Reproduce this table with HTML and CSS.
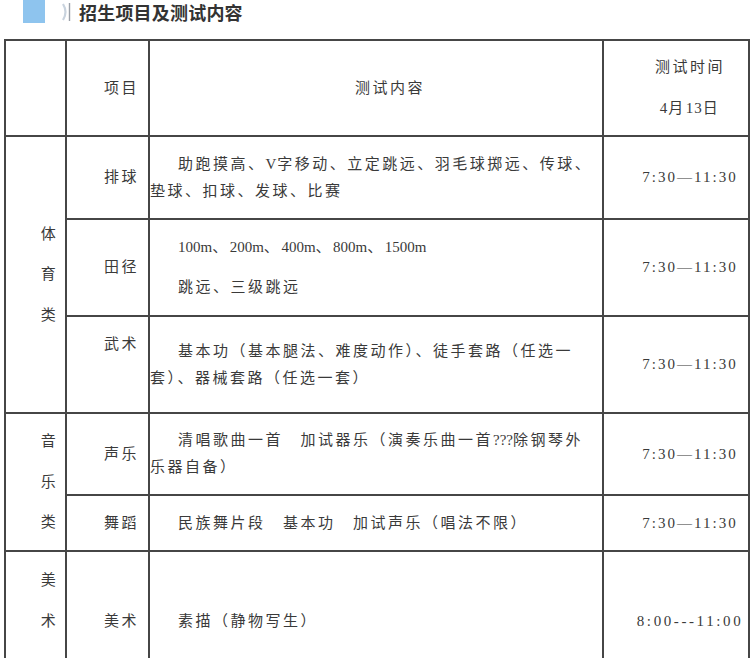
FILE: index.html
```html
<!DOCTYPE html>
<html lang="zh-CN">
<head>
<meta charset="utf-8">
<title>招生项目及测试内容</title>
<link rel="stylesheet" href="styles.css">
</head>
<body>
<div class="head">
  <div class="blue"></div>
  <svg class="deco" width="10" height="20" viewBox="0 0 10 20">
    <path d="M1 2 Q6 10 1 18" fill="none" stroke="#c9d3de" stroke-width="2.2"/>
    <path d="M7.5 1 V19" stroke="#9aa0a8" stroke-width="1.4"/>
  </svg>
  <h1 class="title">招生项目及测试内容</h1>
</div>
<table class="grid">
  <colgroup>
    <col class="c1"><col class="c2"><col class="c3"><col class="c4">
  </colgroup>
  <tr class="r-head">
    <td class="ctr"></td>
    <td class="ctr"><p>项目</p></td>
    <td class="ctr"><p>测试内容</p></td>
    <td class="ctr"><p>测试时间</p><p><span class="n">4</span>月<span class="n">13</span>日</p></td>
  </tr>
  <tr class="r1">
    <td class="ctr" rowspan="3"><p>体</p><p>育</p><p>类</p></td>
    <td class="ctr"><p>排球</p></td>
    <td class="txt"><p>助跑摸高、<span class="n">V</span>字移动、立定跳远、羽毛球掷远、传球、<br>垫球、扣球、发球、比赛</p></td>
    <td class="ctr"><p class="t">7:30—11:30</p></td>
  </tr>
  <tr class="r2">
    <td class="ctr"><p>田径</p></td>
    <td class="txt"><p><span class="n0">100m</span>、<span class="n0">200m</span>、<span class="n0">400m</span>、<span class="n0">800m</span>、<span class="n0">1500m</span></p><p>跳远、三级跳远</p></td>
    <td class="ctr"><p class="t">7:30—11:30</p></td>
  </tr>
  <tr class="r3">
    <td class="ctr"><p>武术</p><p>&nbsp;</p></td>
    <td class="txt"><p>基本功（基本腿法、难度动作）、徒手套路（任选一<br>套）、器械套路（任选一套）</p></td>
    <td class="ctr"><p class="t">7:30—11:30</p></td>
  </tr>
  <tr class="r4">
    <td class="ctr" rowspan="2"><p>音</p><p>乐</p><p>类</p></td>
    <td class="ctr"><p>声乐</p></td>
    <td class="txt"><p>清唱歌曲一首　加试器乐（演奏乐曲一首<span class="n0">???</span>除钢琴外<br>乐器自备）</p></td>
    <td class="ctr"><p class="t">7:30—11:30</p></td>
  </tr>
  <tr class="r5">
    <td class="ctr"><p>舞蹈</p></td>
    <td class="txt"><p>民族舞片段　基本功　加试声乐（唱法不限）</p></td>
    <td class="ctr"><p class="t">7:30—11:30</p></td>
  </tr>
  <tr class="r6">
    <td class="ctr"><p>美</p><p>术</p><p>&nbsp;</p></td>
    <td class="ctr"><p>美术</p></td>
    <td class="txt"><p>素描（静物写生）</p></td>
    <td class="ctr"><p class="t2">8:00---11:00</p></td>
  </tr>
</table>
</body>
</html>
```
FILE: styles.css
```css
html, body {
  margin: 0;
  padding: 0;
  background: #ffffff;
}
body {
  font-family: "Liberation Serif", "Noto Sans CJK SC", serif;
  color: #3a3a3a;
  width: 750px;
  overflow: hidden;
}
.head {
  display: flex;
  align-items: center;
  height: 24px;
}
.blue {
  width: 22px;
  height: 23px;
  margin-left: 23px;
  align-self: flex-start;
  background: #8ec4ee;
}
.deco {
  margin-left: 17px;
  flex: none;
}
.title {
  margin: 0 0 0 7px;
  font-family: "Noto Sans CJK SC", sans-serif;
  font-size: 18px;
  font-weight: 700;
  color: #333333;
  line-height: 24px;
  letter-spacing: 0.2px;
}
.grid {
  border-collapse: collapse;
  table-layout: fixed;
  width: 746px;
  margin: 15px 0 0 4px;
  font-size: 15px;
  letter-spacing: 2.5px;
}
.c1 { width: 61px; }
.c2 { width: 83px; }
.c3 { width: 454px; }
.c4 { width: 146px; }
.grid td {
  border: 2px solid #464646;
  padding: 0;
  vertical-align: middle;
}
.grid p {
  margin: 0;
  line-height: 27px;
  text-indent: 28px;
  white-space: nowrap;
}
.grid p + p {
  margin-top: 13.5px;
}
.ctr { text-align: center; }
.txt { text-align: left; }
.n { letter-spacing: 1px; }
.n0 { letter-spacing: 0; }
.t { letter-spacing: 2px; }
.t2 { letter-spacing: 2.6px; }
.r-head { height: 96px; }
.r1 { height: 83px; }
.r2 { height: 97px; }
.r3 { height: 97px; }
.r4 { height: 82px; }
.r5 { height: 56px; }
.r6 { height: 140px; }
```
